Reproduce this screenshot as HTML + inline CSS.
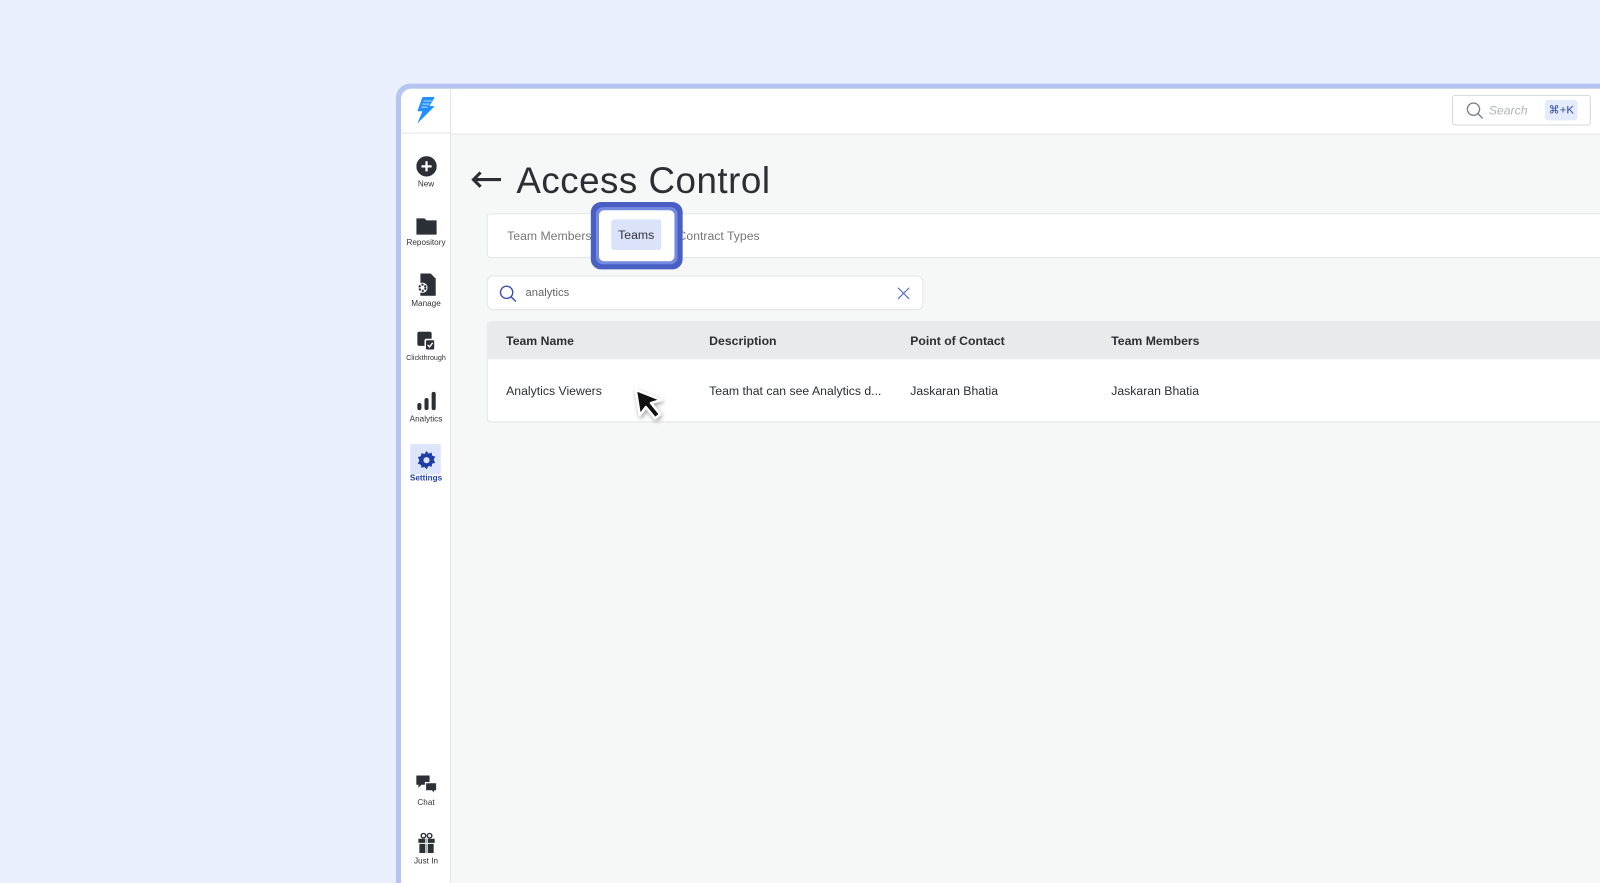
<!DOCTYPE html>
<html style="overflow:hidden"><head><meta charset="utf-8"><style>
*{box-sizing:border-box;margin:0;padding:0}
body{width:1600px;height:883px;background:#e9effc;font-family:"Liberation Sans",sans-serif;position:relative;overflow:hidden;color:#2b2f33}
.wrap{position:absolute;left:0;top:0;width:1600px;height:860px;transform:scale(1.0204);transform-origin:0 0}
.frame{position:absolute;left:388px;top:82px;width:1212px;height:800px;background:#b5c4f0;border-radius:14px 0 0 0}
.app{position:absolute;left:393px;top:87px;width:1207px;height:795px;background:#f6f7f7;border-radius:10px 0 0 0;overflow:hidden}
.side{position:absolute;left:0;top:0;width:49px;height:795px;background:#fff;border-right:1px solid #e3e5e8}
.logo{position:absolute;left:0;top:0;width:49px;height:44px;border-bottom:1px solid #e3e5e8}
.hdr{position:absolute;left:49px;top:0;right:0;height:45px;background:#fff;border-bottom:1px solid #e3e5e8}
.nav{position:absolute;left:0;width:49px;text-align:center;font-size:8px;color:#333}
.nav svg{display:block;margin:0 auto 3px}
.abs{position:absolute}
</style></head><body><div class="wrap">
<div class="frame"></div>
<div class="app">
 <div class="hdr"></div>
 <div class="side">
  <div class="logo"><svg class="abs" style="left:13px;top:7px" width="22" height="28" viewBox="0 0 22 28"><path d="M8 1h12l-5 9h5L3 27l5-12H3z" fill="#1e90ff"/><path d="M9 5h8M8 8h7M7 11h6" stroke="#9fd0ff" stroke-width="1.2"/></svg></div>
  <div class="nav" style="top:66px"><svg width="20" height="20"><circle cx="10" cy="10" r="10" fill="#2b3036"/><path d="M10 5v10M5 10h10" stroke="#fff" stroke-width="2.2"/></svg>New</div>
  <div class="nav" style="top:125px"><svg width="20" height="18"><path d="M0 2h8l2 2h10v14H0z" fill="#2b3036"/></svg>Repository</div>
  <div class="nav" style="top:181px"><svg width="20" height="22"><path d="M4 0h10l5 5v17H4z" fill="#2b3036"/><circle cx="6" cy="14" r="5" fill="#fff"/><circle cx="6" cy="14" r="3" fill="none" stroke="#2b3036" stroke-width="2" stroke-dasharray="2 1.2"/></svg>Manage</div>
  <div class="nav" style="top:238px;font-size:7px"><svg width="20" height="20"><rect x="1" y="0" width="14" height="14" rx="2" fill="#2b3036"/><rect x="8" y="7" width="11" height="12" rx="2" fill="#fff"/><rect x="9.5" y="8.5" width="8" height="9" rx="1" fill="#2b3036"/><path d="M11 13l2 2 3-4" stroke="#fff" stroke-width="1.4" fill="none"/></svg>Clickthrough</div>
  <div class="nav" style="top:296px"><svg width="20" height="20"><rect x="1" y="12" width="4" height="7" rx="2" fill="#2b3036"/><rect x="8" y="7" width="4" height="12" rx="2" fill="#2b3036"/><rect x="15" y="1" width="4" height="18" rx="2" fill="#2b3036"/></svg>Analytics</div>
  <div class="abs" style="left:9px;top:348px;width:30px;height:30px;background:#dde5fb;border-radius:2px"></div>
  <div class="nav" style="top:354px;color:#1f3fa8;font-weight:bold"><svg width="20" height="20" viewBox="0 0 20 20"><path d="M10 1l2 2.5 3-1 .5 3 3 1-1.5 3 1.5 3-3 1-.5 3-3-1L10 19l-2-2.5-3 1-.5-3-3-1L3 10 1.5 7l3-1 .5-3 3 1z" fill="#1f3fa8"/><circle cx="10" cy="10" r="3" fill="#dde5fb"/></svg>Settings</div>
  <div class="nav" style="top:672px"><svg width="22" height="20"><path d="M1 1h13v9H6l-3 3v-3H1z" fill="#2b3036"/><path d="M10 8h11v8h-2v3l-3-3h-6z" fill="#2b3036" stroke="#fff" stroke-width="1.2"/></svg>Chat</div>
  <div class="nav" style="top:729px"><svg width="20" height="20"><path d="M2 6h16v4H2zM3 11h14v9H3z" fill="#2b3036"/><path d="M9.3 6v14M10.7 6v14" stroke="#fff" stroke-width="1"/><circle cx="7" cy="3" r="2.2" fill="none" stroke="#2b3036" stroke-width="1.4"/><circle cx="13" cy="3" r="2.2" fill="none" stroke="#2b3036" stroke-width="1.4"/></svg>Just In</div>
 </div>
 <div class="abs" style="left:1030px;top:6px;width:136px;height:30px;background:#fff;border:1px solid #d4d7dc;border-radius:3px">
  <svg class="abs" style="left:13px;top:6px" width="17" height="17"><circle cx="7" cy="7" r="6" fill="none" stroke="#7a7f86" stroke-width="1.3"/><path d="M11.5 11.5l4.5 4.5" stroke="#7a7f86" stroke-width="1.3"/></svg>
  <span class="abs" style="left:35px;top:7px;font-size:12px;color:#b0b4ba;font-style:italic">Search</span>
  <span class="abs" style="left:90px;top:4px;width:32px;height:20px;background:#e4ebfc;color:#2b45a5;font-size:11px;text-align:center;line-height:20px;border-radius:3px">⌘+K</span>
 </div>
 <svg class="abs" style="left:69px;top:81px" width="30" height="16"><path d="M2 8h27M9 1L2 8l7 7" stroke="#2b2f33" stroke-width="3" fill="none"/></svg>
 <div class="abs" style="left:113px;top:69px;font-size:36px;letter-spacing:0.5px;color:#2b2f33">Access Control</div>
 <div class="abs" style="left:84px;top:122px;width:1130px;height:44px;background:#fff;border:1px solid #e3e5e8;border-radius:4px">
  <span class="abs" style="left:19px;top:14px;font-size:12px;color:#777">Team Members</span>
  <span class="abs" style="left:186px;top:14px;font-size:12px;color:#777">Contract Types</span>
 </div>
 <div class="abs" style="left:186px;top:111px;width:90px;height:66px;background:#4a5fc4;border-radius:10px"></div>
 <div class="abs" style="left:191px;top:116px;width:80px;height:56px;background:#7589e0;border-radius:7px"></div>
 <div class="abs" style="left:194px;top:119px;width:74px;height:50px;background:#fff;border-radius:5px"></div>
 <div class="abs" style="left:206px;top:128px;width:49px;height:30px;background:#dbe3fb;border-radius:3px;font-size:12px;line-height:30px;text-align:center;color:#333">Teams</div>
 <div class="abs" style="left:84px;top:183px;width:428px;height:34px;background:#fff;border:1px solid #e3e5e8;border-radius:6px">
  <svg class="abs" style="left:11px;top:8px" width="18" height="18"><circle cx="7.5" cy="7.5" r="6" fill="none" stroke="#3a4fb0" stroke-width="1.4"/><path d="M12 12l4.5 4.5" stroke="#3a4fb0" stroke-width="1.4"/></svg>
  <span class="abs" style="left:37px;top:10px;font-size:11px;color:#666">analytics</span>
  <svg class="abs" style="left:401px;top:10px" width="13" height="13"><path d="M1 1l11 11M12 1L1 12" stroke="#5a6ec8" stroke-width="1.2"/></svg>
 </div>
 <div class="abs" style="left:84px;top:228px;width:1130px;height:99px;background:#fff;border:1px solid #e3e5e8;border-radius:4px;overflow:hidden">
  <div class="abs" style="left:0;top:0;right:0;height:36px;background:#e9eaec"></div>
  <span class="abs" style="left:18px;top:11px;font-size:12px;font-weight:bold">Team Name</span>
  <span class="abs" style="left:217px;top:11px;font-size:12px;font-weight:bold">Description</span>
  <span class="abs" style="left:414px;top:11px;font-size:12px;font-weight:bold">Point of Contact</span>
  <span class="abs" style="left:611px;top:11px;font-size:12px;font-weight:bold">Team Members</span>
  <span class="abs" style="left:18px;top:60px;font-size:12px">Analytics Viewers</span>
  <span class="abs" style="left:217px;top:60px;font-size:12px">Team that can see Analytics d...</span>
  <span class="abs" style="left:414px;top:60px;font-size:12px">Jaskaran Bhatia</span>
  <span class="abs" style="left:611px;top:60px;font-size:12px">Jaskaran Bhatia</span>
 </div>
 <svg class="abs" style="left:226px;top:292px;filter:drop-shadow(1px 2px 2px rgba(0,0,0,.35))" width="40" height="42"><path d="M4 3l4 25 6-8 9 11 5-4-9-11 10-3z" fill="#111" stroke="#fff" stroke-width="2.5" stroke-linejoin="round"/></svg>
</div>
</div></body></html>
